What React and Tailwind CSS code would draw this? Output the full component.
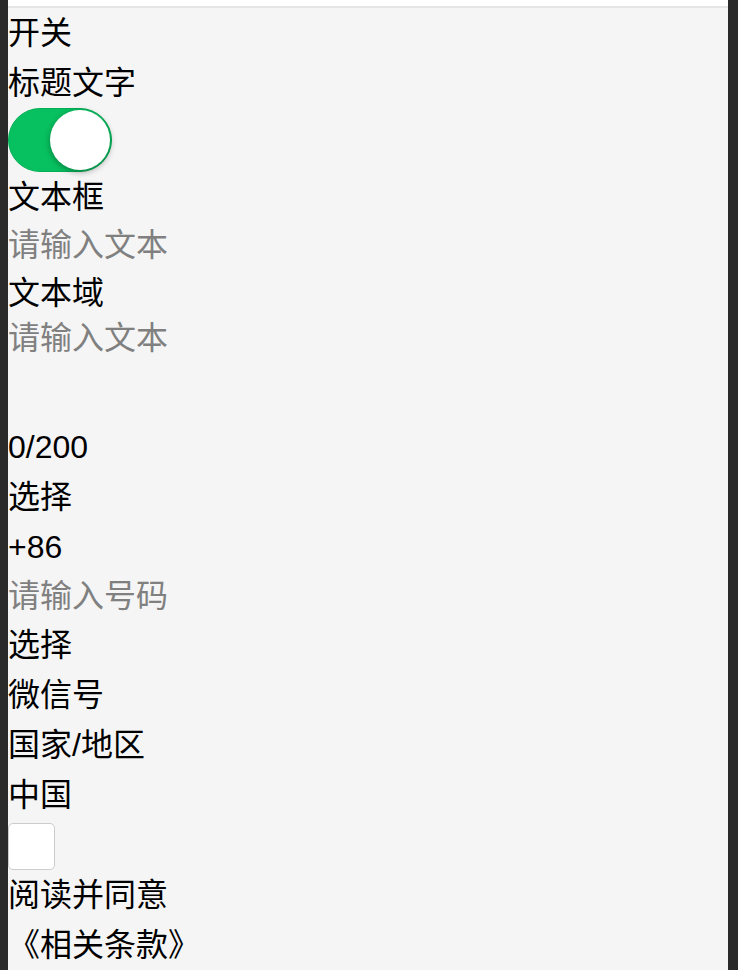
import React from 'react';

const font = { fontFamily: '"Liberation Sans", "Noto Sans CJK SC", sans-serif' };

function Line({ children }) {
  return <div className="h-[50px] leading-[50px] whitespace-nowrap">{children}</div>;
}

function Toggle() {
  return (
    <div className="relative h-[64px] w-[104px] rounded-full bg-[#07c160] border border-[#06ad56]">
      <div className="absolute right-[1px] top-[1px] h-[60px] w-[60px] rounded-full bg-white shadow-[0_2px_6px_rgba(0,0,0,0.35)]" />
    </div>
  );
}

export default function App() {
  return (
    <div className="flex h-[970px] w-[738px] overflow-hidden bg-[#2a2a2a]" style={font}>
      <div className="ml-[8px] flex w-[720px] flex-col bg-[#f5f5f5] text-[32px] text-black">
        <div className="h-[8px] shrink-0 bg-white border-b-2 border-[#e5e5e5]" />
        <Line>开关</Line>
        <Line>标题文字</Line>
        <Toggle />
        <Line>文本框</Line>
        <input
          className="block h-[46px] w-[300px] bg-transparent text-[32px] outline-none placeholder:text-[#808080]"
          placeholder="请输入文本"
        />
        <Line>文本域</Line>
        <textarea
          className="block h-[104px] w-[300px] resize-none bg-transparent text-[32px] leading-[40px] outline-none placeholder:text-[#808080]"
          placeholder="请输入文本"
        />
        <Line>0/200</Line>
        <Line>选择</Line>
        <Line>+86</Line>
        <input
          className="block h-[48px] w-[300px] bg-transparent text-[32px] outline-none placeholder:text-[#808080]"
          placeholder="请输入号码"
        />
        <Line>选择</Line>
        <Line>微信号</Line>
        <Line>国家/地区</Line>
        <Line>中国</Line>
        <div className="mt-[3px] h-[47px] w-[47px] shrink-0 rounded-[5px] border-[1.5px] border-[#cccccc] bg-white" />
        <Line>阅读并同意</Line>
        <Line>《相关条款》</Line>
      </div>
    </div>
  );
}
